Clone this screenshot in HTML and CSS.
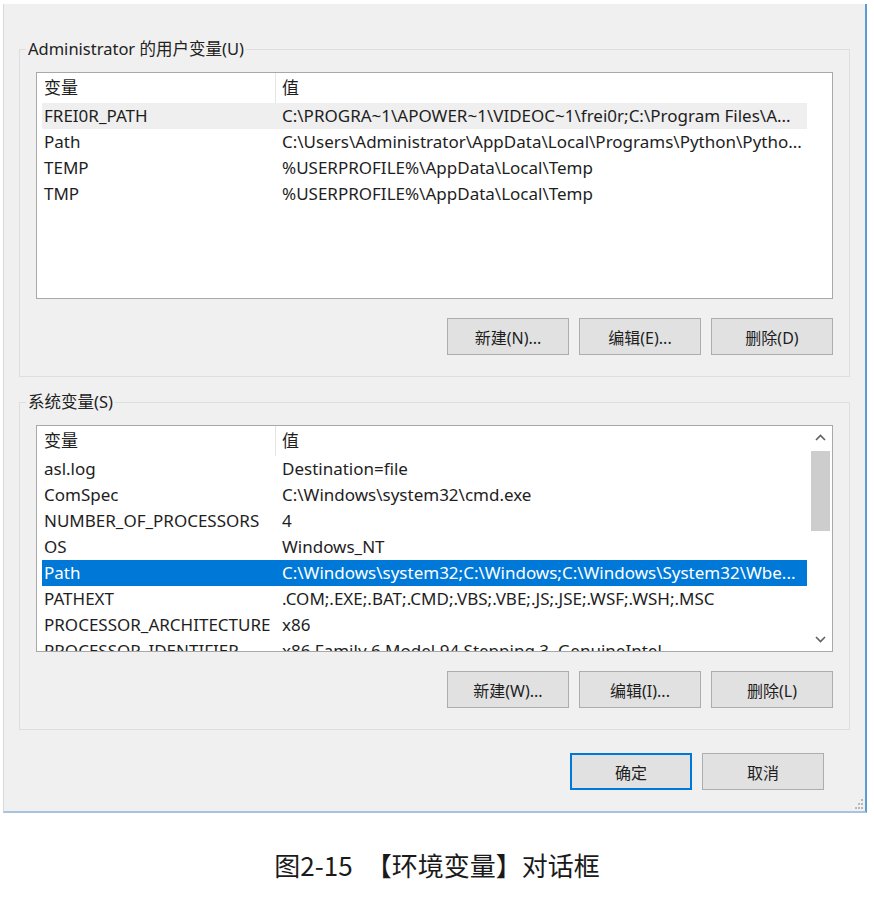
FILE: index.html
```html
<!DOCTYPE html>
<html lang="zh-CN">
<head>
<meta charset="utf-8">
<title>环境变量</title>
<link rel="stylesheet" href="styles.css">
</head>
<body>
<div class="dialog">
  <fieldset class="group group-user">
    <legend>Administrator 的用户变量(U)</legend>
    <div class="list">
      <div class="list-body">
        <div class="row head"><span class="c1">变量</span><span class="c2">值</span></div>
        <div class="row hover"><span class="c1">FREI0R_PATH</span><span class="c2">C:\PROGRA~1\APOWER~1\VIDEOC~1\frei0r;C:\Program Files\A...</span></div>
        <div class="row"><span class="c1">Path</span><span class="c2">C:\Users\Administrator\AppData\Local\Programs\Python\Pytho...</span></div>
        <div class="row"><span class="c1">TEMP</span><span class="c2">%USERPROFILE%\AppData\Local\Temp</span></div>
        <div class="row"><span class="c1">TMP</span><span class="c2">%USERPROFILE%\AppData\Local\Temp</span></div>
      </div>
    </div>
    <div class="btns">
      <button class="btn">新建(N)...</button>
      <button class="btn">编辑(E)...</button>
      <button class="btn">删除(D)</button>
    </div>
  </fieldset>

  <fieldset class="group group-sys">
    <legend>系统变量(S)</legend>
    <div class="list">
      <div class="list-body">
        <div class="row head"><span class="c1">变量</span><span class="c2">值</span></div>
        <div class="row"><span class="c1">asl.log</span><span class="c2">Destination=file</span></div>
        <div class="row"><span class="c1">ComSpec</span><span class="c2">C:\Windows\system32\cmd.exe</span></div>
        <div class="row"><span class="c1">NUMBER_OF_PROCESSORS</span><span class="c2">4</span></div>
        <div class="row"><span class="c1">OS</span><span class="c2">Windows_NT</span></div>
        <div class="row sel"><span class="c1">Path</span><span class="c2">C:\Windows\system32;C:\Windows;C:\Windows\System32\Wbe...</span></div>
        <div class="row"><span class="c1">PATHEXT</span><span class="c2">.COM;.EXE;.BAT;.CMD;.VBS;.VBE;.JS;.JSE;.WSF;.WSH;.MSC</span></div>
        <div class="row"><span class="c1">PROCESSOR_ARCHITECTURE</span><span class="c2">x86</span></div>
        <div class="row"><span class="c1">PROCESSOR_IDENTIFIER</span><span class="c2">x86 Family 6 Model 94 Stepping 3, GenuineIntel</span></div>
      </div>
      <div class="scroll">
        <div class="arrow"><svg width="11" height="7" viewBox="0 0 11 7"><path d="M1 6 L5.5 1.5 L10 6" fill="none" stroke="#606060" stroke-width="1.6"/></svg></div>
        <div class="thumb"></div>
        <div class="scroll-space"></div>
        <div class="arrow"><svg width="11" height="7" viewBox="0 0 11 7"><path d="M1 1 L5.5 5.5 L10 1" fill="none" stroke="#606060" stroke-width="1.6"/></svg></div>
      </div>
    </div>
    <div class="btns">
      <button class="btn">新建(W)...</button>
      <button class="btn">编辑(I)...</button>
      <button class="btn">删除(L)</button>
    </div>
  </fieldset>

  <div class="footer">
    <button class="btn default">确定</button>
    <button class="btn">取消</button>
  </div>
  <svg class="grip" width="10" height="10" viewBox="0 0 10 10">
    <rect x="8" y="0" width="2" height="2" fill="#b8b8b8"/>
    <rect x="5" y="4" width="2" height="2" fill="#b8b8b8"/>
    <rect x="8" y="4" width="2" height="2" fill="#b8b8b8"/>
    <rect x="2" y="8" width="2" height="2" fill="#b8b8b8"/>
    <rect x="5" y="8" width="2" height="2" fill="#b8b8b8"/>
    <rect x="8" y="8" width="2" height="2" fill="#b8b8b8"/>
  </svg>
</div>
<p class="caption">图2-15　【环境变量】对话框</p>
</body>
</html>
```

FILE: styles.css
```css
* { box-sizing: border-box; }

body {
  margin: 0;
  width: 874px;
  background: #ffffff;
  font-family: "Noto Sans", "Noto Sans CJK SC", sans-serif;
  font-size: 17px;
  color: #1e1e1e;
}

.dialog {
  position: relative;
  margin: 4px 0 0 3px;
  width: 864px;
  height: 809px;
  padding: 0 15px;
  background: #f0f0f0;
  border-left: 1px solid #d9d9d9;
  border-right: 2px solid #5b9bd5;
  border-bottom: 2px solid #a7c3dd;
  display: flex;
  flex-direction: column;
}

.group {
  margin: 0;
  min-width: 0;
  padding: 14px 16px 21px;
  border: 1px solid #dedede;
}

.group-user { margin-top: 36px; }
.group-sys { margin-top: 16px; }

.group legend {
  margin-left: -10px;
  padding: 0 2px;
  font-size: 16.5px;
  line-height: 18px;
  color: #222;
}

.list {
  display: flex;
  height: 227px;
  background: #ffffff;
  border: 1px solid #a8a8a8;
  overflow: hidden;
}

.list-body {
  flex: 1;
  min-width: 0;
  padding-left: 5px;
  overflow: hidden;
}

.row {
  display: flex;
  width: 765px;
  height: 26px;
  line-height: 26px;
  white-space: nowrap;
}

.row.head {
  height: 30px;
  line-height: 30px;
}

.c1 {
  width: 233px;
  flex: none;
  padding-left: 2px;
  overflow: hidden;
}

.c2 {
  flex: 1;
  min-width: 0;
  padding-left: 7px;
  overflow: hidden;
}

.head .c2 {
  border-left: 1px solid #e5e5e5;
  padding-left: 6px;
}

.row.hover { background: #efefef; }

.row.sel {
  background: #0078d7;
  color: #ffffff;
}

.scroll {
  width: 23px;
  flex: none;
  display: flex;
  flex-direction: column;
  align-items: center;
  background: #ffffff;
}

.arrow {
  width: 23px;
  height: 23px;
  display: flex;
  align-items: center;
  justify-content: center;
}

.thumb {
  width: 19px;
  height: 80px;
  margin-top: 2px;
  background: #cdcdcd;
}

.scroll-space { flex: 1; }

.btns {
  display: flex;
  justify-content: flex-end;
  gap: 10px;
  margin-top: 19px;
}

.btn {
  width: 122px;
  height: 37px;
  padding: 0;
  background: #e1e1e1;
  border: 1px solid #adadad;
  font-family: inherit;
  font-size: 16px;
  color: #1e1e1e;
}

.btn.default { border: 2px solid #0078d7; }

.footer {
  display: flex;
  justify-content: flex-end;
  gap: 10px;
  margin-top: 23px;
  padding-right: 26px;
}

.grip {
  position: absolute;
  right: 2px;
  bottom: 2px;
}

.caption {
  margin: 34px 0 0;
  text-align: center;
  font-family: "Noto Sans CJK SC", "Noto Sans", sans-serif;
  font-size: 26px;
  line-height: 36px;
  color: #1a1a1a;
}
```
